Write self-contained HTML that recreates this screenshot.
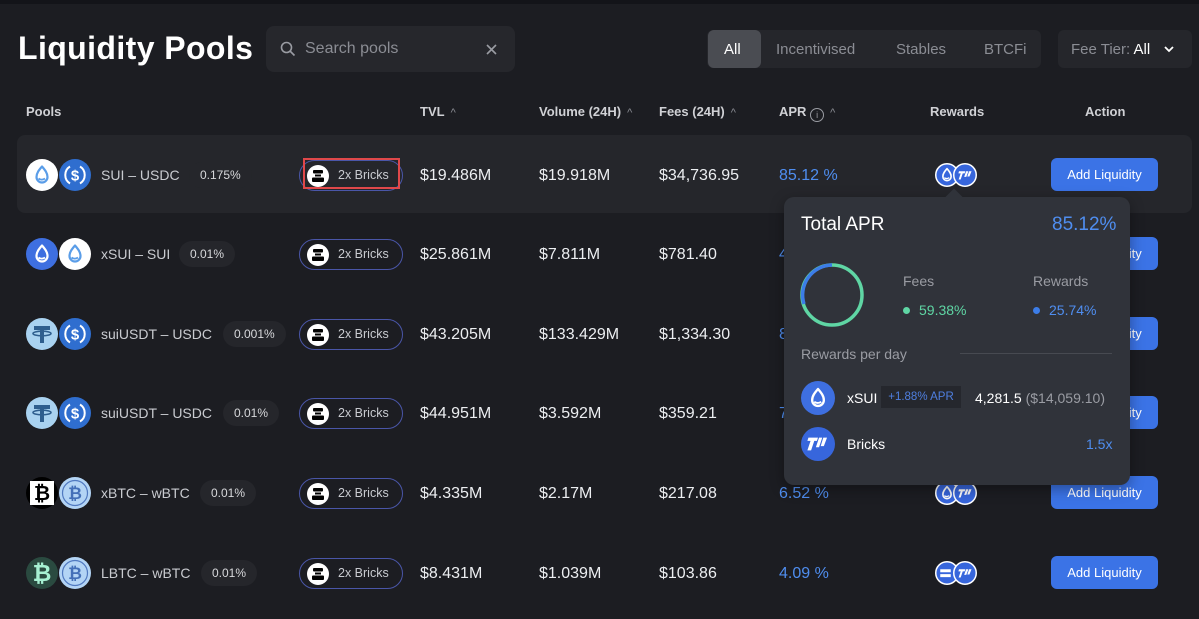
<!DOCTYPE html>
<html><head><meta charset="utf-8"><style>
*{margin:0;padding:0;box-sizing:border-box}
body{width:1199px;height:619px;background:#1c1d22;font-family:"Liberation Sans",sans-serif;color:#e8e9ec;position:relative;overflow:hidden}
.a{position:absolute}
.top{left:0;top:0;width:1199px;height:4px;background:#131419}
h1{position:absolute;left:18px;top:30px;font-size:32px;font-weight:bold;color:#fff;letter-spacing:0.4px}
.search{left:266px;top:26px;width:249px;height:46px;background:#26272c;border-radius:8px}
.tabs{left:707px;top:30px;width:334px;height:38px;background:#25262b;border-radius:6px}
.tab{position:absolute;top:11px;font-size:15px;color:#8b8d94}
.fee{left:1058px;top:30px;width:134px;height:38px;background:#25262b;border-radius:6px}
.th{position:absolute;top:104px;font-size:13px;font-weight:bold;color:#d0d1d5}
.car{color:#8b8d94;font-weight:normal;font-size:11px;margin-left:6px}
.hl{left:17px;top:135px;width:1175px;height:78px;background:#25262b;border-radius:8px}
.row{position:absolute;left:0;width:1199px;height:40px}
.ic{position:absolute;top:4px;width:32px;height:32px}
.nm{position:absolute;left:101px;top:12px;font-size:14px;color:#c9cbd0}
.pill{position:absolute;top:7px;height:26px;padding:0 11px;background:#25262b;border-radius:13px;font-size:12px;line-height:26px;color:#d8d9dc}
.br{position:absolute;left:299px;top:5px;width:104px;height:31px;border:1.5px solid #4a56a8;border-radius:16px}
.br svg{position:absolute;left:7px;top:4px}
.br span{position:absolute;left:38px;top:7px;font-size:12.5px;color:#c9cbd0}
.v{position:absolute;top:12px;font-size:16px;color:#eceef1}
.apr{color:#4f8ef0}
.btn{position:absolute;left:1051px;top:3px;width:107px;height:33px;background:#3b73e6;border-radius:6px;color:#fff;font-size:13px;text-align:center;line-height:33px}
.rw{position:absolute;left:935px;top:8px}
.pop{left:784px;top:197px;width:346px;height:288px;background:#30333a;border-radius:10px;box-shadow:0 4px 14px rgba(0,0,0,.35)}
</style></head><body>
<svg width="0" height="0" style="position:absolute">
<defs>
<symbol id="drop" viewBox="0 0 32 32"><path d="M16 7.5C13 11 10.5 14 10.5 18a5.5 5.5 0 0 0 11 0C21.5 14 19 11 16 7.5Z" fill="none" stroke="currentColor" stroke-width="2.2" stroke-linejoin="round"/><path d="M12.5 19.5c1.5 1.2 4 1.8 6.5 0" fill="none" stroke="currentColor" stroke-width="1.8"/></symbol>
<symbol id="sui" viewBox="0 0 32 32"><circle cx="16" cy="16" r="16" fill="#fff"/><use href="#drop" color="#5a9de8"/></symbol>
<symbol id="xsui" viewBox="0 0 32 32"><circle cx="16" cy="16" r="16" fill="#3e6fe0"/><use href="#drop" color="#fff"/></symbol>
<symbol id="usdc" viewBox="0 0 32 32"><circle cx="16" cy="16" r="16" fill="#2f6ecf"/><path d="M11 7.5A10 10 0 0 0 11 24.5M21 7.5A10 10 0 0 1 21 24.5" fill="none" stroke="#fff" stroke-width="2"/><text x="16" y="21.5" font-family="Liberation Sans" font-weight="bold" font-size="15" fill="#fff" text-anchor="middle">$</text></symbol>
<symbol id="usdt" viewBox="0 0 32 32"><circle cx="16" cy="16" r="16" fill="#a9d2f0"/><rect x="8" y="8" width="16" height="4" fill="#2e5e8e"/><rect x="14" y="8" width="4" height="17" fill="#2e5e8e"/><ellipse cx="16" cy="15.5" rx="9" ry="2.3" fill="none" stroke="#2e5e8e" stroke-width="1.6"/></symbol>
<symbol id="wbtc" viewBox="0 0 32 32"><circle cx="16" cy="16" r="16" fill="#b3d4f5"/><circle cx="16" cy="16" r="12.5" fill="none" stroke="#5079c0" stroke-width="1.2"/><text x="16" y="22" font-family="Liberation Sans" font-weight="bold" font-size="17" fill="#4470b8" text-anchor="middle">₿</text></symbol>
<symbol id="xbtc" viewBox="0 0 32 32"><circle cx="16" cy="16" r="16" fill="#000"/><rect x="4" y="4" width="24" height="24" fill="#fff"/><text x="16" y="23" font-family="Liberation Sans" font-weight="bold" font-size="20" fill="#000" text-anchor="middle">₿</text></symbol>
<symbol id="lbtc" viewBox="0 0 32 32"><circle cx="16" cy="16" r="16" fill="#2a4a40"/><text x="16" y="24" font-family="Liberation Sans" font-weight="bold" font-size="23" fill="#a6f0d2" text-anchor="middle">₿</text></symbol>
<symbol id="brk" viewBox="0 0 22 22"><circle cx="11" cy="11" r="11" fill="#fff"/><rect x="6" y="5" width="10" height="3.5" rx="1" fill="#000"/><rect x="8" y="9.5" width="6" height="2" fill="#000"/><rect x="5" y="12.5" width="12" height="4.5" rx="1" fill="#000"/></symbol>
<symbol id="onep" viewBox="0 0 32 32"><circle cx="16" cy="16" r="16" fill="#3766dc"/><path d="M7 10h9l-1 3h-2.5l-3 9H6l3-9H6z M17 10h3l-3 9h-3z M21 10h3.5l-3 8h-3z" fill="#fff"/></symbol>
<symbol id="xsuis" viewBox="0 0 32 32"><circle cx="16" cy="16" r="15" fill="#3766dc" stroke="#fff" stroke-width="2"/><use href="#drop" color="#fff"/></symbol>
<symbol id="onepb" viewBox="0 0 32 32"><circle cx="16" cy="16" r="15" fill="#3766dc" stroke="#fff" stroke-width="2"/><path d="M8 11h8.5l-1 2.8H13l-2.8 8.2H7.5l2.8-8.2H7.2z M17.5 11h3l-2.8 7.5h-2.8z M21.5 11h3.2l-2.8 7h-2.8z" fill="#fff"/></symbol>
<symbol id="eqs" viewBox="0 0 32 32"><circle cx="16" cy="16" r="15" fill="#3766dc" stroke="#fff" stroke-width="2"/><rect x="7" y="11" width="14" height="4" fill="#fff"/><rect x="7" y="17.5" width="14" height="4" fill="#fff"/></symbol>
</defs></svg>

<div class="a top"></div>
<h1>Liquidity Pools</h1>
<div class="a search">
<svg class="a" style="left:14px;top:15px" width="16" height="16" viewBox="0 0 16 16"><circle cx="6.5" cy="6.5" r="5" fill="none" stroke="#9a9ca3" stroke-width="1.6"/><path d="M10 10l4.5 4.5" stroke="#9a9ca3" stroke-width="1.6"/></svg>
<span class="a" style="left:39px;top:14px;font-size:16px;color:#8b8d94">Search pools</span>
<svg class="a" style="left:220px;top:18px" width="11" height="11" viewBox="0 0 11 11"><path d="M1 1l9 9M10 1l-9 9" stroke="#9a9ca3" stroke-width="1.6"/></svg>
</div>
<div class="a tabs">
<div class="a" style="left:1px;top:0;width:53px;height:38px;background:#4a4c52;border-radius:6px"></div>
<span class="tab" style="left:17px;color:#fff">All</span>
<span class="tab" style="left:69px">Incentivised</span>
<span class="tab" style="left:189px">Stables</span>
<span class="tab" style="left:277px">BTCFi</span>
</div>
<div class="a fee"><span class="tab" style="left:13px">Fee Tier: <span style="color:#fff">All</span></span>
<svg class="a" style="left:106px;top:16px" width="10" height="7" viewBox="0 0 10 7"><path d="M1 1l4 4 4-4" fill="none" stroke="#fff" stroke-width="1.8"/></svg></div>

<span class="th" style="left:26px">Pools</span>
<span class="th" style="left:420px">TVL<span class="car">^</span></span>
<span class="th" style="left:539px">Volume (24H)<span class="car">^</span></span>
<span class="th" style="left:659px">Fees (24H)<span class="car">^</span></span>
<span class="th" style="left:779px">APR <span style="display:inline-block;width:14px;height:14px;border:1.2px solid #9a9ca3;border-radius:50%;font-size:9px;text-align:center;line-height:12px;color:#9a9ca3;font-weight:normal;vertical-align:-2px">i</span><span class="car">^</span></span>
<span class="th" style="left:930px">Rewards</span>
<span class="th" style="left:1085px">Action</span>

<div class="a hl"></div>
<div class="a" style="left:303px;top:158px;width:97px;height:31px;border:2px solid #e0484a;z-index:3"></div>

<div class="row" style="top:155px">
<svg class="ic" style="left:26px"><use href="#sui"/></svg><svg class="ic" style="left:59px"><use href="#usdc"/></svg>
<span class="nm">SUI – USDC</span><span class="pill" style="left:189px">0.175%</span>
<div class="br"><svg width="22" height="22"><use href="#brk"/></svg><span>2x Bricks</span></div>
<span class="v" style="left:420px">$19.486M</span><span class="v" style="left:539px">$19.918M</span><span class="v" style="left:659px">$34,736.95</span><span class="v apr" style="left:779px">85.12 %</span>
<svg class="rw" width="44" height="24"><svg width="24" height="24"><use href="#xsuis"/></svg><svg x="18" width="24" height="24"><use href="#onepb"/></svg></svg>
<div class="btn">Add Liquidity</div></div>

<div class="row" style="top:234px">
<svg class="ic" style="left:26px"><use href="#xsui"/></svg><svg class="ic" style="left:59px"><use href="#sui"/></svg>
<span class="nm">xSUI – SUI</span><span class="pill" style="left:179px">0.01%</span>
<div class="br"><svg width="22" height="22"><use href="#brk"/></svg><span>2x Bricks</span></div>
<span class="v" style="left:420px">$25.861M</span><span class="v" style="left:539px">$7.811M</span><span class="v" style="left:659px">$781.40</span><span class="v apr" style="left:779px">4</span>
<div class="btn">Add Liquidity</div></div>

<div class="row" style="top:314px">
<svg class="ic" style="left:26px"><use href="#usdt"/></svg><svg class="ic" style="left:59px"><use href="#usdc"/></svg>
<span class="nm">suiUSDT – USDC</span><span class="pill" style="left:223px">0.001%</span>
<div class="br"><svg width="22" height="22"><use href="#brk"/></svg><span>2x Bricks</span></div>
<span class="v" style="left:420px">$43.205M</span><span class="v" style="left:539px">$133.429M</span><span class="v" style="left:659px">$1,334.30</span><span class="v apr" style="left:779px">8</span>
<div class="btn">Add Liquidity</div></div>

<div class="row" style="top:393px">
<svg class="ic" style="left:26px"><use href="#usdt"/></svg><svg class="ic" style="left:59px"><use href="#usdc"/></svg>
<span class="nm">suiUSDT – USDC</span><span class="pill" style="left:223px">0.01%</span>
<div class="br"><svg width="22" height="22"><use href="#brk"/></svg><span>2x Bricks</span></div>
<span class="v" style="left:420px">$44.951M</span><span class="v" style="left:539px">$3.592M</span><span class="v" style="left:659px">$359.21</span><span class="v apr" style="left:779px">7</span>
<div class="btn">Add Liquidity</div></div>

<div class="row" style="top:473px">
<svg class="ic" style="left:26px"><use href="#xbtc"/></svg><svg class="ic" style="left:59px"><use href="#wbtc"/></svg>
<span class="nm">xBTC – wBTC</span><span class="pill" style="left:200px">0.01%</span>
<div class="br"><svg width="22" height="22"><use href="#brk"/></svg><span>2x Bricks</span></div>
<span class="v" style="left:420px">$4.335M</span><span class="v" style="left:539px">$2.17M</span><span class="v" style="left:659px">$217.08</span><span class="v apr" style="left:779px">6.52 %</span>
<svg class="rw" width="44" height="24"><svg width="24" height="24"><use href="#xsuis"/></svg><svg x="18" width="24" height="24"><use href="#onepb"/></svg></svg>
<div class="btn">Add Liquidity</div></div>

<div class="row" style="top:553px">
<svg class="ic" style="left:26px"><use href="#lbtc"/></svg><svg class="ic" style="left:59px"><use href="#wbtc"/></svg>
<span class="nm">LBTC – wBTC</span><span class="pill" style="left:201px">0.01%</span>
<div class="br"><svg width="22" height="22"><use href="#brk"/></svg><span>2x Bricks</span></div>
<span class="v" style="left:420px">$8.431M</span><span class="v" style="left:539px">$1.039M</span><span class="v" style="left:659px">$103.86</span><span class="v apr" style="left:779px">4.09 %</span>
<svg class="rw" width="44" height="24"><svg width="24" height="24"><use href="#eqs"/></svg><svg x="18" width="24" height="24"><use href="#onepb"/></svg></svg>
<div class="btn">Add Liquidity</div></div>

<div class="a pop">
<div class="a" style="left:164px;top:-6px;width:12px;height:12px;background:#30333a;transform:rotate(45deg)"></div>
<span class="a" style="left:17px;top:17px;font-size:19px;color:#fff">Total APR</span>
<span class="a" style="left:268px;top:17px;font-size:19px;color:#4f8ef0">85.12%</span>
<svg class="a" style="left:16px;top:66px" width="64" height="64" viewBox="0 0 64 64"><circle cx="32" cy="32" r="30" fill="none" stroke="#5fd6a4" stroke-width="3.5"/><path d="M32 2A30 30 0 0 0 4 41" fill="none" stroke="#3c7de8" stroke-width="3.5"/></svg>
<span class="a" style="left:119px;top:76px;font-size:14px;color:#9a9ca3">Fees</span>
<span class="a" style="left:249px;top:76px;font-size:14px;color:#9a9ca3">Rewards</span>
<span class="a" style="left:119px;top:110px;width:7px;height:7px;border-radius:50%;background:#5fd6a4"></span>
<span class="a" style="left:135px;top:105px;font-size:14px;color:#5fd6a4">59.38%</span>
<span class="a" style="left:249px;top:110px;width:7px;height:7px;border-radius:50%;background:#3c7de8"></span>
<span class="a" style="left:265px;top:105px;font-size:14px;color:#4f8ef0">25.74%</span>
<span class="a" style="left:17px;top:149px;font-size:14px;color:#9a9ca3">Rewards per day</span>
<div class="a" style="left:176px;top:156px;width:152px;height:1px;background:#474a51"></div>
<svg class="a" style="left:17px;top:184px" width="34" height="34"><use href="#xsui"/></svg>
<span class="a" style="left:63px;top:193px;font-size:14px;color:#fff">xSUI</span>
<span class="a" style="left:97px;top:189px;width:80px;height:22px;background:#25272d;font-size:11.5px;line-height:22px;color:#4f7fe0;text-align:center">+1.88% APR</span>
<span class="a" style="left:191px;top:193px;font-size:14px;color:#fff">4,281.5 <span style="color:#9a9ca3">($14,059.10)</span></span>
<svg class="a" style="left:17px;top:230px" width="34" height="34"><use href="#onep"/></svg>
<span class="a" style="left:63px;top:239px;font-size:14px;color:#fff">Bricks</span>
<span class="a" style="left:302px;top:239px;font-size:14px;color:#4f8ef0">1.5x</span>
</div>
</body></html>
